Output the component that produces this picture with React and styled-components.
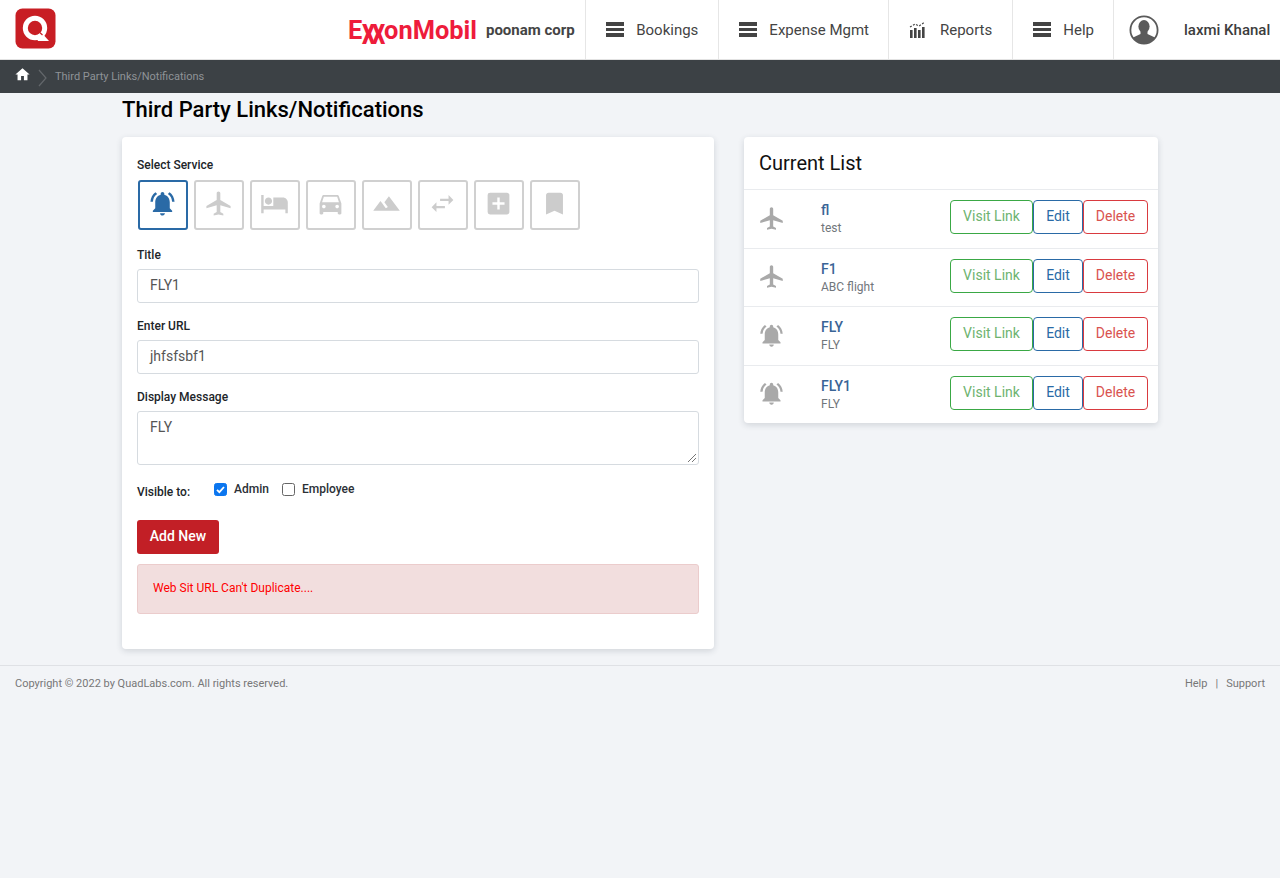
import React from "react";
import styled, { createGlobalStyle } from "styled-components";
import {
  MdNotificationsActive, MdLocalAirport, MdHotel, MdDirectionsCar, MdTerrain,
  MdSwapHoriz, MdAddBox, MdBookmark, MdHome,
} from "react-icons/md";

const Global = createGlobalStyle`
  html, body { margin: 0; padding: 0; background: #f2f4f7; }
  body { font-family: Roboto, "Liberation Sans", sans-serif; color: #212529; min-height: 878px; }
  * { box-sizing: border-box; }
`;

const Header = styled.header`
  height: 60px; background: #fff; display: flex; align-items: stretch;
  border-bottom: 1px solid #e2e2e2;
`;
const LogoBox = styled.div`
  width: 41px; height: 41px; margin: 8px 0 0 15px; flex: none;
  svg { display: block; }
`;
const Brand = styled.div`
  margin-left: auto; display: flex; align-items: center; padding-right: 10px;
`;
const Exxon = styled.span`
  font-family: Roboto, "Liberation Sans", sans-serif; font-weight: 700; font-size: 25.4px; color: #ee1c3b;
  letter-spacing: 0; line-height: 1; display: flex; align-items: baseline; margin-top: 2px;
`;
const CrossX = styled.span`
  display: inline-block; transform: scale(1.05, 1.45); transform-origin: 50% 40%; margin: 0 ${p => p.$mr}px 0 ${p => p.$ml}px;
`;
const Corp = styled.span`
  font-size: 15px; font-weight: 700; color: #444; margin-left: 9px; padding-right: 0.5px;
`;
const NavItem = styled.div`
  display: flex; align-items: center; gap: 12px; padding: 0 ${p => p.$pr || 20}px 0 20px;
  border-left: 1px solid #e6e6e6; font-size: 15px; color: #444;
`;
const UserBox = styled.div`
  display: flex; align-items: center; border-left: 1px solid #e6e6e6; padding-left: 15px; width: 167px;
`;
const UserName = styled.span`
  font-size: 15px; font-weight: 500; color: #3d3d3d; margin-left: 25px; white-space: nowrap;
`;
const Bars = styled.span`
  width: 18px; height: 15px; display: flex; flex-direction: column; justify-content: space-between;
  i { display: block; height: 3.6px; background: #444; }
`;

const Crumbs = styled.div`
  height: 33px; background: #3c4145; display: flex; align-items: center; padding-left: 14px; color: #8f9397; font-size: 11px;
`;
const HomeIcon = styled(MdHome)`
  color: #fff; font-size: 17px; margin-top: -4px;
`;
const Chevron = styled.svg`
  margin: 3px 7px 0 7px;
`;

const Main = styled.main`
  width: 1036px; margin-left: 122px;
`;
const Title = styled.h1`
  margin: 0; font-size: 22px; font-weight: 500; color: #000; line-height: 33px; height: 44px;
`;
const Columns = styled.div`
  display: flex; gap: 30px; align-items: flex-start;
`;
const Card = styled.section`
  background: #fff; border-radius: 4px; box-shadow: 0 2px 6px rgba(40, 50, 70, .16); width: ${p => p.$w}px;
`;
const FormCard = styled(Card)`
  padding: 21px 15px 0; height: 512px;
`;
const Label = styled.label`
  display: block; font-size: 12px; font-weight: 500; color: #212529; line-height: 14px; margin-bottom: ${p => p.$mb || 7}px;
`;
const ServiceRow = styled.div`
  display: flex; gap: 6px; margin: 0 0 18px 1px;
`;
const ServiceBtn = styled.div`
  width: 50px; height: 50px; border-radius: 3px; display: flex; align-items: center; justify-content: center;
  border: 2px solid ${p => p.$active ? "#2a6aa6" : "#d0d0d0"}; padding: 0 1px 4px 0;
  color: ${p => p.$active ? "#2a6aa6" : "#cccccc"}; font-size: 29px; background: #fff;
`;
const Field = styled.div`
  height: 34px; border: 1px solid #d6dbe0; border-radius: 3px; padding: 0 12px 2px; display: flex; align-items: center;
  font-size: 14px; color: #555; margin-bottom: 16px; background: #fff;
`;
const Area = styled.div`
  height: 54px; border: 1px solid #d6dbe0; border-radius: 3px; padding: 7px 12px; font-size: 14px; color: #555;
  position: relative; line-height: 16px; margin-bottom: 16px;
`;
const Grip = styled.svg`
  position: absolute; right: 1px; bottom: 1px;
`;
const VisibleRow = styled.div`
  display: flex; align-items: flex-start; height: 36px;
`;
const VisibleLabel = styled.span`
  font-size: 12px; font-weight: 500; width: 77px; line-height: 14px; margin-top: 4px;
`;
const Check = styled.span`
  width: 13px; height: 13px; border-radius: 2.5px; flex: none; margin-top: 2px; display: flex; align-items: center; justify-content: center;
  background: ${p => p.$on ? "#0b76ef" : "#fff"}; border: 1px solid ${p => p.$on ? "#0b76ef" : "#666"};
`;
const CheckText = styled.span`
  font-size: 12px; font-weight: 500; color: #2b3036; margin: 1px 13px 0 7px; line-height: 14px;
`;
const AddBtn = styled.div`
  width: 82px; height: 34px; border-radius: 3px; background: #c21f26; color: #fff; font-size: 14px; font-weight: 500;
  display: flex; align-items: center; justify-content: center; margin-top: 3px; padding-bottom: 2px;
`;
const Alert = styled.div`
  height: 50px; margin-top: 10px; background: #f2dede; border: 1px solid #ebcccc; border-radius: 3px;
  padding: 0 0 2px 15px; display: flex; align-items: center; font-size: 12px; color: #ff0000;
`;
const CardHead = styled.div`
  height: 53px; padding-left: 15px; display: flex; align-items: center; font-size: 20px; color: #111;
  border-bottom: 1px solid #e9ebee;
`;
const Row = styled.div`
  height: ${p => p.$h}px; display: flex; align-items: center; padding: 0 10px 0 14px;
  border-top: ${p => p.$first ? "none" : "1px solid #e9ebee"};
`;
const RowIcon = styled.div`
  width: 63px; color: #a9a9a9; font-size: 27px; display: flex; flex: none; margin-bottom: 2px;
`;
const RowText = styled.div`
  flex: 1;
`;
const RowTitle = styled.div`
  font-size: 14px; font-weight: 500; color: #3a6496; line-height: 16px;
`;
const RowSub = styled.div`
  font-size: 12px; color: #71767b; line-height: 15px; margin-top: 3px;
`;
const Actions = styled.div`
  display: flex; margin-bottom: 4px;
`;
const ActionBtn = styled.div`
  height: 34px; width: ${p => p.$w}px; border: 1px solid ${p => p.$c}; border-radius: 4px; color: ${p => p.$t || p.$c};
  font-size: 14px; display: flex; align-items: center; justify-content: center; background: #fff; padding-bottom: 2px;
`;
const Footer = styled.footer`
  margin-top: 16px; border-top: 1px solid #dfe1e5; height: 36px; display: flex; align-items: center; justify-content: space-between;
  padding: 0 15px; font-size: 11px; color: #777;
`;
const Sep = styled.span`
  margin: 0 8px;
`;

const Logo = () => (
  <svg width="41" height="41" viewBox="0 0 41 41">
    <rect x="0.5" y="0.5" width="40" height="40" rx="7" fill="#c81e24" />
    <circle cx="20" cy="20" r="9.7" fill="none" stroke="#fff" strokeWidth="5" />
    <path d="M21 29 L26 24 L34 33 L23 33 Z" fill="#fff" />
    <path d="M21.5 21.5 L27.5 27" stroke="#c81e24" strokeWidth="1.2" />
  </svg>
);
const Menu = () => <Bars><i /><i /><i /></Bars>;
const ReportIcon = () => (
  <svg width="19" height="17" viewBox="0 0 19 17" fill="#444">
    <rect x="1" y="9" width="2.6" height="8" /><rect x="5" y="7" width="2.6" height="10" />
    <rect x="9" y="9" width="2.6" height="8" /><rect x="13" y="6" width="2.6" height="11" />
    <path d="M1 6 L6 3 L10 5 L16 1" fill="none" stroke="#444" strokeWidth="1.2" strokeDasharray="2 1.5" />
  </svg>
);
const UserIcon = () => (
  <svg width="30" height="30" viewBox="0 0 30 30">
    <defs><clipPath id="uc"><circle cx="15" cy="15" r="13.4" /></clipPath></defs>
    <circle cx="15" cy="15" r="13.6" fill="#fff" stroke="#5a5a5a" strokeWidth="1.8" />
    <g clipPath="url(#uc)" fill="#5a5a5a">
      <ellipse cx="15" cy="11.5" rx="5.6" ry="6.5" />
      <path d="M11.5 16 L11.5 19 L3 23 L3 30 L27 30 L27 23 L18.5 19 L18.5 16 Z" />
    </g>
  </svg>
);

const services = [MdNotificationsActive, MdLocalAirport, MdHotel, MdDirectionsCar, MdTerrain, MdSwapHoriz, MdAddBox, MdBookmark];
const rows = [
  { Icon: MdLocalAirport, t: "fl", s: "test", h: 58 },
  { Icon: MdLocalAirport, t: "F1", s: "ABC flight", h: 58 },
  { Icon: MdNotificationsActive, t: "FLY", s: "FLY", h: 59 },
  { Icon: MdNotificationsActive, t: "FLY1", s: "FLY", h: 58 },
];

export default function App() {
  return (
    <>
      <Global />
      <Header>
        <LogoBox><Logo /></LogoBox>
        <Brand>
          <Exxon>E<CrossX $ml={0} $mr={-3}>x</CrossX><CrossX $ml={0} $mr={-1}>x</CrossX>onMobil</Exxon>
          <Corp>poonam corp</Corp>
        </Brand>
        <NavItem><Menu />Bookings</NavItem>
        <NavItem $pr={19}><Menu />Expense Mgmt</NavItem>
        <NavItem><ReportIcon />Reports</NavItem>
        <NavItem $pr={19}><Menu />Help</NavItem>
        <UserBox><UserIcon /><UserName>laxmi Khanal</UserName></UserBox>
      </Header>
      <Crumbs>
        <HomeIcon />
        <Chevron width="10" height="18" viewBox="0 0 10 18"><path d="M1 1 L8 9 L1 17" fill="none" stroke="#63676b" strokeWidth="1.2" /></Chevron>
        Third Party Links/Notifications
      </Crumbs>
      <Main>
        <Title>Third Party Links/Notifications</Title>
        <Columns>
          <FormCard $w={592}>
            <Label $mb={8}>Select Service</Label>
            <ServiceRow>
              {services.map((I, i) => <ServiceBtn key={i} $active={i === 0}><I /></ServiceBtn>)}
            </ServiceRow>
            <Label>Title</Label>
            <Field>FLY1</Field>
            <Label>Enter URL</Label>
            <Field>jhfsfsbf1</Field>
            <Label>Display Message</Label>
            <Area>FLY
              <Grip width="10" height="10" viewBox="0 0 10 10"><path d="M1 9 L9 1 M5 9 L9 5" stroke="#777" strokeWidth="1" /></Grip>
            </Area>
            <VisibleRow>
              <VisibleLabel>Visible to:</VisibleLabel>
              <Check $on><svg width="11" height="11" viewBox="0 0 11 11"><path d="M2 5.8 L4.4 8.2 L9 3" fill="none" stroke="#fff" strokeWidth="1.8" /></svg></Check>
              <CheckText>Admin</CheckText>
              <Check />
              <CheckText>Employee</CheckText>
            </VisibleRow>
            <AddBtn>Add New</AddBtn>
            <Alert>Web Sit URL Can't Duplicate....</Alert>
          </FormCard>
          <Card $w={414}>
            <CardHead>Current List</CardHead>
            {rows.map((r, i) => (
              <Row key={i} $h={r.h} $first={i === 0}>
                <RowIcon><r.Icon /></RowIcon>
                <RowText>
                  <RowTitle>{r.t}</RowTitle>
                  <RowSub>{r.s}</RowSub>
                </RowText>
                <Actions>
                  <ActionBtn $w={83} $c="#3aa845" $t="#6db36f">Visit Link</ActionBtn>
                  <ActionBtn $w={50} $c="#2a6aa6">Edit</ActionBtn>
                  <ActionBtn $w={65} $c="#d93a3f" $t="#d9534f">Delete</ActionBtn>
                </Actions>
              </Row>
            ))}
          </Card>
        </Columns>
      </Main>
      <Footer>
        <span>Copyright © 2022 by QuadLabs.com. All rights reserved.</span>
        <span>Help<Sep>|</Sep>Support</span>
      </Footer>
    </>
  );
}
